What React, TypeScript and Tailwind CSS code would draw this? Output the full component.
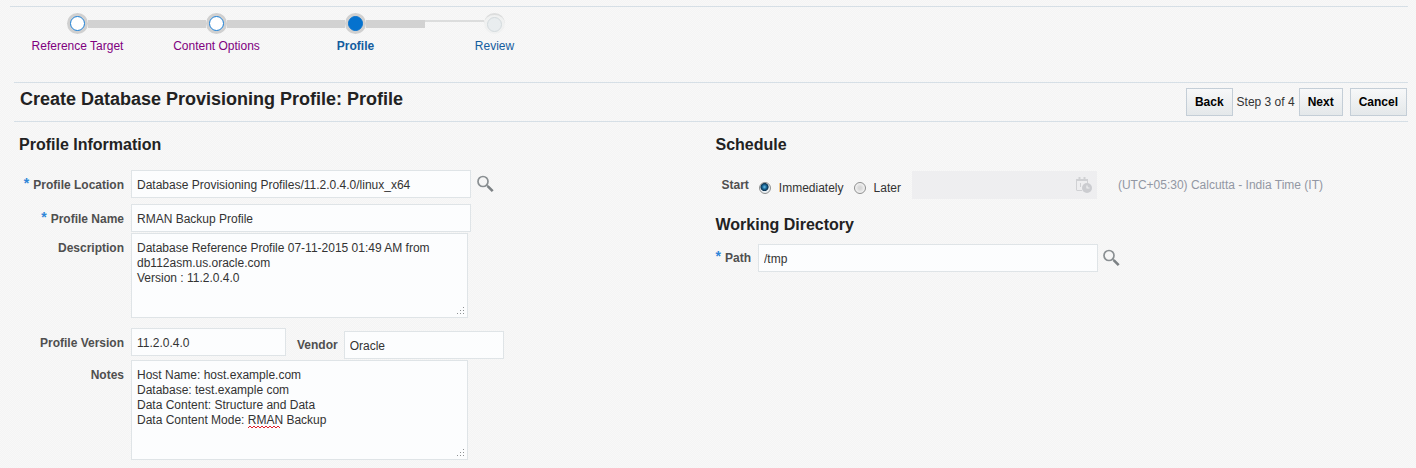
import { useState } from "react";
import type { ReactNode } from "react";

const STEPS = [
  { label: "Reference Target", state: "done" },
  { label: "Content Options", state: "done" },
  { label: "Profile", state: "current" },
  { label: "Review", state: "next" },
];

const fieldClass =
  "block border border-[#dfe4e7] bg-[#fcfdfe] px-[5px] text-xs text-[#333] outline-none focus:border-[#8ab8e6]";

const dotClass: Record<string, string> = {
  done: "border-[#1a7fd6] bg-white",
  current: "border-[#0572ce] bg-[#0572ce]",
  next: "border-[#d3dadd] bg-[#e9edef]",
};

const linkClass: Record<string, string> = {
  done: "text-[#7f007f]",
  current: "font-bold text-[#145c9e]",
  next: "text-[#145c9e]",
};

function SearchIcon() {
  return (
    <svg width="18" height="18" viewBox="0 0 18 18" fill="none">
      <circle cx="6" cy="6.5" r="5" stroke="#8a8f92" strokeWidth="1.7" />
      <path d="M9.5 10l1.5 1.5" stroke="#8a8f92" strokeWidth="1.5" />
      <path d="M10.700 11.200l5 5" stroke="#7c8184" strokeWidth="2.600" />
    </svg>
  );
}

function CalendarClockIcon() {
  return (
    <svg width="18" height="18" viewBox="0 0 18 18" fill="none">
      <path d="M1.500 14V3.500H12.500V7M1.500 14.500H7" stroke="#d0d1d4" strokeWidth="1" />
      <path d="M1 4h12M4.500 1v4M9.500 1v4" stroke="#d0d1d4" strokeWidth="2" />
      <path d="M5.500 7v4" stroke="#d0d1d4" />
      <circle cx="12" cy="12" r="5" fill="#cbccd0" />
      <path d="M12 9.500V12h2.500" stroke="#efeff1" strokeWidth="1.200" />
    </svg>
  );
}

function ResizeGrip() {
  return (
    <svg className="pointer-events-none absolute right-[3px] bottom-[3px]" width="8" height="8" fill="#8f9294">
      <path d="M6 0h1v1h-1zM3 3h1v1h-1zM6 3h1v1h-1zM0 6h1v1h-1zM3 6h1v1h-1zM6 6h1v1h-1z" />
    </svg>
  );
}

function Label({ htmlFor, required, children }: { htmlFor: string; required?: boolean; children: ReactNode }) {
  return (
    <label htmlFor={htmlFor} className="flex justify-end gap-1 font-bold text-[#4f4f4f]">
      {required && <span className="-mt-1 text-sm font-bold text-[#2f86d8]">*</span>}
      {children}
    </label>
  );
}

function Train() {
  return (
    <nav className="ml-2.5 border-t border-[#d6dfe6] pt-1.5">
      <ol className="-ml-0.5 flex">
        {STEPS.map((step, i) => (
          <li key={step.label} className="w-[139px] text-center">
            <div className="flex items-center">
              <span
                className={`flex-1 ${
                  i === 0 ? "" : step.state === "next" ? "h-2 border-t-2 border-[#dcdddd]" : "h-2 bg-[#d2d2d2]"
                }`}
              />
              <span
                className={`flex size-[21px] items-center justify-center rounded-full ${
                  step.state === "next" ? "border-t-2 border-[#dcdddd] bg-[#f0f1f1]" : "bg-[#d0d0d0]"
                }`}
              >
                <span className={`size-[15px] rounded-full border ${dotClass[step.state]}`} />
              </span>
              <span className={`flex-1 ${step.state === "next" ? "" : "h-2 bg-[#d2d2d2]"}`} />
            </div>
            <a href="#" className={`mt-1 block leading-4 ${linkClass[step.state]}`}>
              {step.label}
            </a>
          </li>
        ))}
      </ol>
    </nav>
  );
}

function Button({ children }: { children: ReactNode }) {
  return (
    <button
      type="button"
      className="h-7 border border-[#c4ced7] bg-linear-to-b from-[#f7f8f9] to-[#e4e8ea] px-2 font-bold text-black"
    >
      {children}
    </button>
  );
}

function Radio({ label, checked, onChange }: { label: string; checked: boolean; onChange: () => void }) {
  return (
    <label className="flex items-center gap-2">
      <input
        type="radio"
        name="start"
        checked={checked}
        onChange={onChange}
        className="size-3 appearance-none rounded-full border border-[#8e8f8f] bg-[radial-gradient(circle,#d8d8d8_20%,#f4f4f4_70%)] checked:bg-[radial-gradient(circle_at_45%_40%,#6cc4ea_0%,#1b6a9c_25%,#0b3350_45%,#e8eef2_55%)]"
      />
      {label}
    </label>
  );
}

export default function App() {
  const [start, setStart] = useState("now");

  return (
    <div className="min-h-screen bg-[#f6f6f6] bg-[repeating-conic-gradient(#f4f4f4_0_25%,#f8f8f8_0_50%)] bg-size-[2px_2px] pt-1.5 pr-2 pb-2 font-['Liberation_Sans',Arial,sans-serif] text-xs text-[#333]">
      <Train />

      {/* Title bar */}
      <header className="mt-7 ml-3.5 flex h-10 items-center justify-between border-y border-[#d6dfe6] pr-px pl-1.5">
        <h1 className="pb-1.5 text-lg font-bold text-[#222]">Create Database Provisioning Profile: Profile</h1>
        <div className="flex items-center">
          <Button>Back</Button>
          <span className="mx-1">Step 3 of 4</span>
          <Button>Next</Button>
          <span className="w-[7px]" />
          <Button>Cancel</Button>
        </div>
      </header>

      <main className="grid grid-cols-2 pt-[13px] pl-[19px]">
        <section>
          <h2 className="text-base leading-5 font-bold text-[#222]">Profile Information</h2>
          <div className="mt-[15px] grid grid-cols-[105px_1fr] gap-x-[7px]">
            <div className="pt-[7px]">
              <Label htmlFor="location" required>Profile Location</Label>
            </div>
            <div className="mb-1.5 flex items-center gap-1.5">
              <input
                id="location"
                className={`h-7 w-[340px] pt-0.5 ${fieldClass}`}
                defaultValue="Database Provisioning Profiles/11.2.0.4.0/linux_x64"
              />
              <button type="button" aria-label="Search location">
                <SearchIcon />
              </button>
            </div>

            <div className="pt-[7px]">
              <Label htmlFor="name" required>Profile Name</Label>
            </div>
            <input id="name" className={`mb-px h-7 w-[340px] pt-0.5 ${fieldClass}`} defaultValue="RMAN Backup Profile" />

            <div className="pt-[7px]">
              <Label htmlFor="description">Description</Label>
            </div>
            <div className="relative mb-2.5 w-[337px]">
              <textarea
                id="description"
                className={`h-[85px] w-full resize-none pt-[7px] leading-[15px] ${fieldClass}`}
                defaultValue={
                  "Database Reference Profile 07-11-2015 01:49 AM from db112asm.us.oracle.com\nVersion : 11.2.0.4.0"
                }
              />
              <ResizeGrip />
            </div>

            <div className="pt-[7px]">
              <Label htmlFor="version">Profile Version</Label>
            </div>
            <div className="mb-px flex">
              <input id="version" className={`h-7 w-[155px] pt-0.5 ${fieldClass}`} defaultValue="11.2.0.4.0" />
              <div className="mt-[3px] ml-[11px] flex items-center gap-1.5">
                <Label htmlFor="vendor">Vendor</Label>
                <input id="vendor" className={`h-7 w-40 pt-0.5 ${fieldClass}`} defaultValue="Oracle" />
              </div>
            </div>

            <div className="pt-[7px]">
              <Label htmlFor="notes">Notes</Label>
            </div>
            <div className="relative w-[337px]">
              <textarea
                id="notes"
                className={`h-[100px] w-full resize-none pt-[7px] leading-[15px] ${fieldClass}`}
                defaultValue={
                  "Host Name: host.example.com\nDatabase: test.example com\nData Content: Structure and Data\nData Content Mode: RMAN Backup"
                }
              />
              {/* Spelling mark under the last line */}
              <svg
                className="pointer-events-none absolute top-[65px] left-[117px]"
                width="35"
                height="4"
                fill="none"
                stroke="#e0202a"
              >
                <path d="M0 3l2-2 2 2 2-2 2 2 2-2 2 2 2-2 2 2 2-2 2 2 2-2 2 2 2-2 2 2 2-2 2 2" />
              </svg>
              <ResizeGrip />
            </div>
          </div>
        </section>

        <section className="pl-0.5">
          <h2 className="text-base leading-5 font-bold text-[#222]">Schedule</h2>
          <div className="mt-4 flex h-7 items-center pl-1.5">
            <span className="font-bold text-[#4f4f4f]">Start</span>
            <div className="mt-1.5 ml-2.5 flex gap-2.5">
              <Radio label="Immediately" checked={start === "now"} onChange={() => setStart("now")} />
              <Radio label="Later" checked={start === "later"} onChange={() => setStart("later")} />
            </div>
            <div className="ml-[11px] flex h-7 w-[185px] items-center bg-[#eeeef0] pr-1">
              <input aria-label="Start date" disabled={start === "now"} className="min-w-0 flex-1 px-[5px] outline-none" />
              <button type="button" aria-label="Pick date" disabled={start === "now"}>
                <CalendarClockIcon />
              </button>
            </div>
            <span className="ml-[21px] text-[#9297a3]">(UTC+05:30) Calcutta - India Time (IT)</span>
          </div>

          <h2 className="mt-4 text-base leading-5 font-bold text-[#222]">Working Directory</h2>
          <div className="mt-[9px] flex items-center">
            <Label htmlFor="path" required>Path</Label>
            <input id="path" className={`ml-[7px] h-7 w-[340px] pt-0.5 ${fieldClass}`} defaultValue="/tmp" />
            <button type="button" aria-label="Search path" className="ml-[5px]">
              <SearchIcon />
            </button>
          </div>
        </section>
      </main>
    </div>
  );
}
